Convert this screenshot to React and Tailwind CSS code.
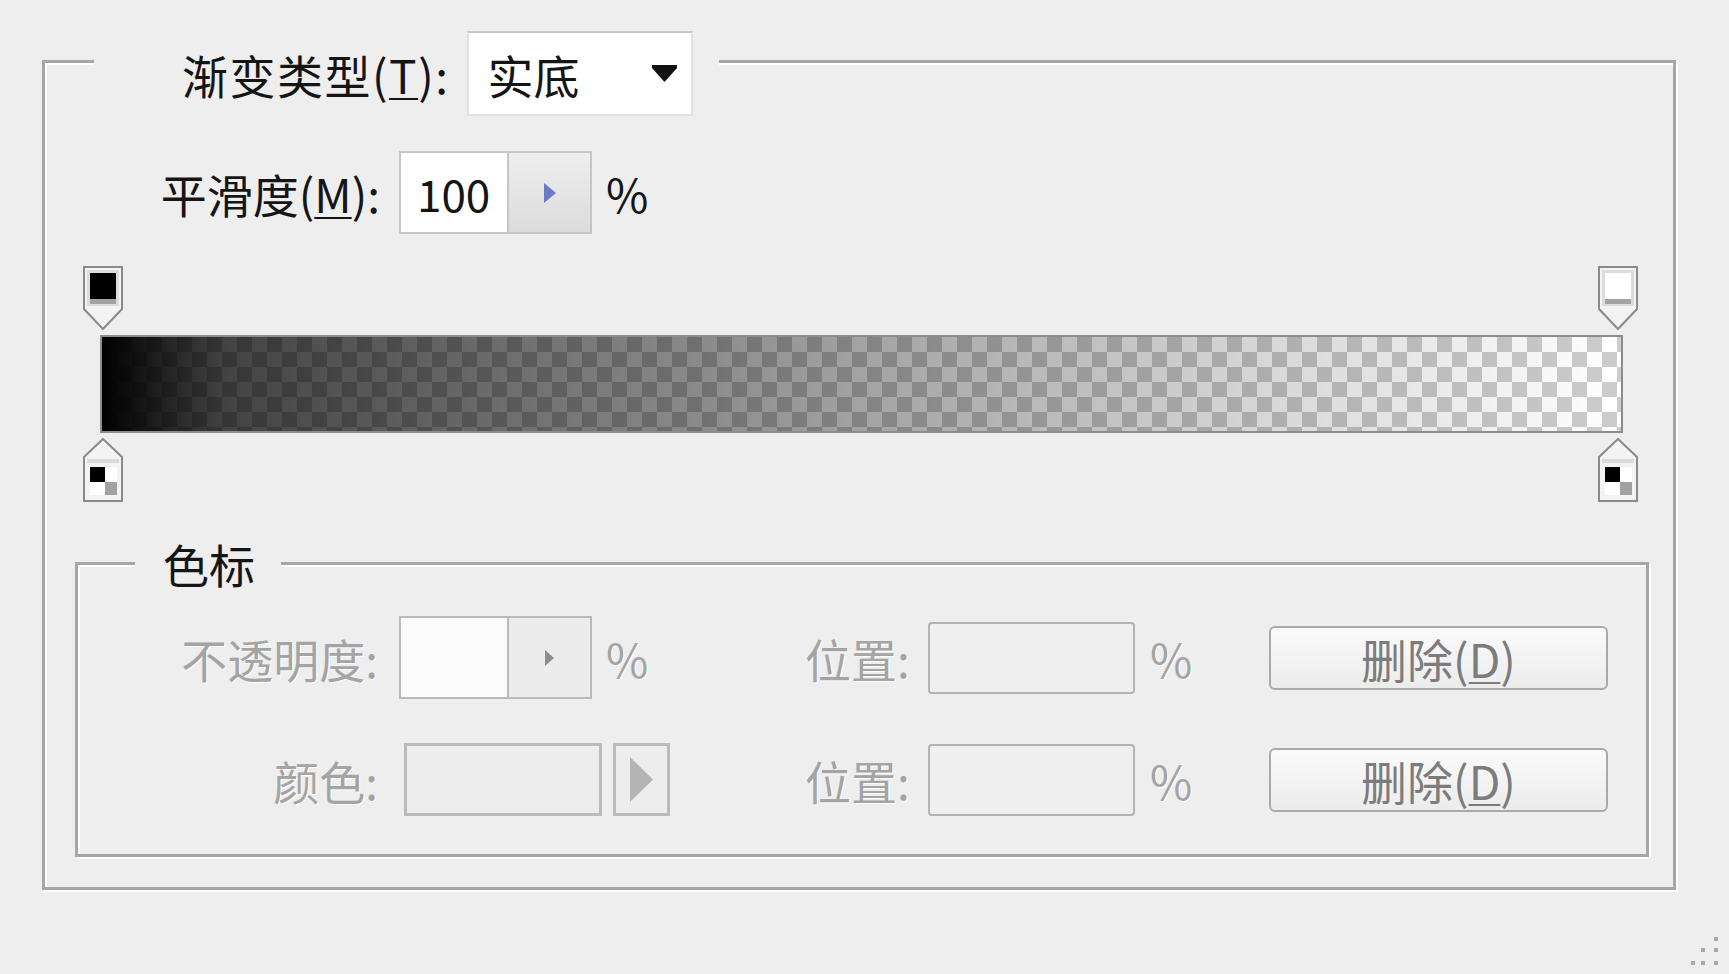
import React from "react";

// Photoshop "渐变编辑器" lower panel, zoomed screenshot
function TopStop({ fill }) {
  return (
    <svg width="40" height="64" viewBox="0 0 40 64">
      <path d="M1 1H39V43L20 63L1 43Z" fill="#f3f3f3" stroke="#8a8a8a" strokeWidth="2" />
      <rect x="4" y="4" width="32" height="36" fill="#dcdcdc" />
      <rect x="7" y="7" width="26" height="26" fill={fill} />
      <rect x="7" y="33" width="26" height="5" fill="#a2a2a2" />
    </svg>
  );
}

function BottomStop() {
  return (
    <svg width="40" height="64" viewBox="0 0 40 64">
      <path d="M20 1L39 19V63H1V19Z" fill="#f3f3f3" stroke="#8a8a8a" strokeWidth="2" />
      <rect x="4" y="21" width="32" height="4" fill="#dadada" />
      <rect x="7" y="29" width="15" height="15" fill="#000000" />
      <rect x="22" y="29" width="12" height="15" fill="#ffffff" />
      <rect x="7" y="44" width="15" height="13" fill="#ffffff" />
      <rect x="22" y="44" width="12" height="13" fill="#a2a2a2" />
    </svg>
  );
}

function DisabledLabel({ className, children }) {
  return (
    <span className={"whitespace-nowrap text-[#a4a4a4] [text-shadow:1px_1px_0_#ffffff] " + className}>
      {children}
    </span>
  );
}

function StopRow({ children, tall }) {
  return (
    <div className={tall ? "flex h-[83px] items-center" : "mt-[44px] flex h-[73px] items-center"}>
      {children}
      <DisabledLabel className="w-[101px] text-right">位置:</DisabledLabel>
      <div className="ml-[22px] h-[72px] w-[207px] rounded-[4px] border-2 border-[#b3b3b3] bg-[#efefef]" />
      <DisabledLabel className="ml-[15px] w-[119px]">%</DisabledLabel>
      <button className="flex h-[64px] w-[339px] items-center justify-center rounded-[6px] border-2 border-[#a9a9a9] bg-gradient-to-b from-[#fafafa] to-[#ececec] text-[#7c7c7c]">
        删除(<span className="underline decoration-2 underline-offset-4">D</span>)
      </button>
    </div>
  );
}

export default function App() {
  return (
    <div className="flex h-[974px] w-full flex-col bg-[#eeeeee] font-['Noto_Sans_CJK_SC','Noto_Sans',sans-serif] text-[46px] leading-none text-[#151515]">
      <fieldset className="ml-[42px] w-[1634px] border-[3px] border-[#a6a6a6] pb-[30px] shadow-[inset_2px_2px_0_#ffffff,2px_2px_0_#ffffff]">
        <legend className="ml-[49px] bg-[#eeeeee] pb-[6px] pl-[88px] pr-[26px] pt-[31px]">
          <div className="flex items-center">
            <span className="whitespace-nowrap tracking-[1.5px]">
              渐变类型(<span className="underline decoration-2 underline-offset-4">T</span>):
            </span>
            <div className="ml-[18px] flex h-[85px] w-[226px] items-center justify-between border-2 border-[#e2e2e2] border-t-[#c6c6c6] bg-white pl-[18px] pr-[14px]">
              <span>实底</span>
              <svg width="25" height="17" viewBox="0 0 25 17">
                <path d="M0 0H25V3L12.5 17L0 3Z" fill="#111111" />
              </svg>
            </div>
          </div>
        </legend>

        <div className="mt-[29px] flex items-center">
          <span className="w-[335px] whitespace-nowrap text-right">
            平滑度(<span className="underline decoration-2 underline-offset-4">M</span>):
          </span>
          <div className="ml-[19px] flex h-[83px] w-[193px] border-2 border-[#c6c6c6]">
            <div className="flex w-[106px] items-center bg-white pl-[16px] text-[44px]">100</div>
            <div className="flex flex-1 items-center justify-center border-l-2 border-[#c6c6c6] bg-gradient-to-b from-[#eeeeee] to-[#dcdcdc]">
              <svg width="12" height="20" viewBox="0 0 12 20">
                <path d="M0 0L12 10L0 20Z" fill="#6c79c9" />
              </svg>
            </div>
          </div>
          <span className="ml-[14px]">%</span>
        </div>

        <div className="ml-[38px] mr-[35px] mt-[32px] flex justify-between">
          <TopStop fill="#000000" />
          <TopStop fill="#ffffff" />
        </div>

        <div className="ml-[55px] mr-[50px] mt-[5px] h-[98px] border-2 border-[#8c8c8c] bg-[image:repeating-conic-gradient(#cdcdcd_0_25%,#ffffff_0_50%)] bg-[length:30px_30px]">
          <div className="h-full w-full bg-[image:linear-gradient(to_right,rgba(0,0,0,1)_0%,rgba(0,0,0,0.74)_8%,rgba(0,0,0,0.55)_29%,rgba(0,0,0,0.36)_50%,rgba(0,0,0,0.17)_75%,rgba(0,0,0,0)_100%)]" />
        </div>

        <div className="ml-[38px] mr-[35px] mt-[5px] flex justify-between">
          <BottomStop />
          <BottomStop />
        </div>

        <fieldset className="ml-[30px] mr-[24px] mt-[38px] border-[3px] border-[#a6a6a6] pb-[38px] shadow-[inset_2px_2px_0_#ffffff,2px_2px_0_#ffffff]">
          <legend className="ml-[57px] bg-[#eeeeee] pl-[28px] pr-[26px]">色标</legend>

          <div className="mt-[30px]">
            <StopRow tall>
              <DisabledLabel className="w-[300px] text-right">不透明度:</DisabledLabel>
              <div className="ml-[21px] flex h-[83px] w-[193px] border-2 border-[#bababa]">
                <div className="w-[106px] bg-[#fbfbfb]" />
                <div className="flex flex-1 items-center justify-center border-l-2 border-[#bababa] bg-[#ececec]">
                  <svg width="9" height="16" viewBox="0 0 9 16">
                    <path d="M0 0L9 8L0 16Z" fill="#8e8e8e" />
                  </svg>
                </div>
              </div>
              <DisabledLabel className="ml-[14px] w-[199px]">%</DisabledLabel>
            </StopRow>

            <StopRow>
              <DisabledLabel className="w-[300px] text-right">颜色:</DisabledLabel>
              <div className="ml-[26px] h-[73px] w-[198px] border-[3px] border-[#bbbbbb] bg-[#ededed]" />
              <div className="ml-[11px] flex h-[73px] w-[57px] items-center justify-center border-[3px] border-[#bbbbbb] bg-[#ededed]">
                <svg width="23" height="45" viewBox="0 0 23 45">
                  <path d="M0 0L23 22.5L0 45Z" fill="#b4b4b4" />
                </svg>
              </div>
              <div className="w-[135px]" />
            </StopRow>
          </div>
        </fieldset>
      </fieldset>

      <div className="flex flex-1 items-end justify-end pb-[6px] pr-[7px]">
        <svg width="34" height="34" viewBox="0 0 34 34">
          <rect x="26" y="3" width="4" height="4" fill="#a8a8a8" />
          <rect x="13" y="14" width="4" height="4" fill="#a8a8a8" />
          <rect x="26" y="14" width="4" height="4" fill="#a8a8a8" />
          <rect x="3" y="27" width="4" height="4" fill="#a8a8a8" />
          <rect x="13" y="27" width="4" height="4" fill="#a8a8a8" />
          <rect x="26" y="27" width="4" height="4" fill="#a8a8a8" />
        </svg>
      </div>
    </div>
  );
}
